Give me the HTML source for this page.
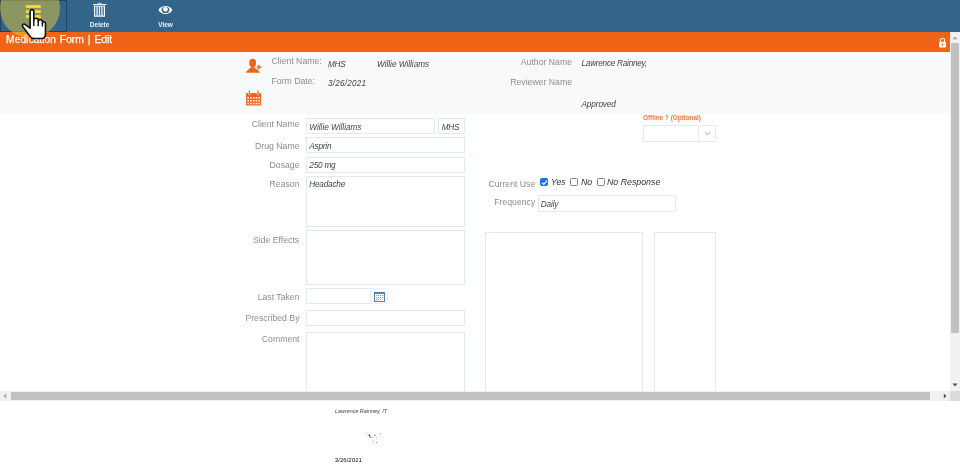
<!DOCTYPE html>
<html>
<head>
<meta charset="utf-8">
<title>Medication Form | Edit</title>
<style>
html,body{margin:0;padding:0;}
body{width:960px;height:469px;overflow:hidden;background:#fff;position:relative;will-change:transform;font-family:"Liberation Sans",sans-serif;}
.abs{position:absolute;}
#toolbar{left:0;top:0;width:960px;height:32px;background:#33658a;}
#btn1{left:0;top:0;width:65px;height:30px;border:1px solid #1f4461;background:#33658a;}
.tlabel{color:#eaf1f8;font-size:6.5px;font-weight:bold;text-align:center;width:60px;}
#titlebar{left:0;top:32px;width:950px;height:20px;background:#f06418;}
#title{left:6.1px;top:33.2px;color:#fff;font-size:10.3px;word-spacing:1.1px;-webkit-text-stroke:0.25px #fff;letter-spacing:0;line-height:14px;white-space:nowrap;}
#hdr{left:0;top:52px;width:950px;height:61.5px;background:#f8f9fb;}
.hl{color:#8c8c8c;font-size:8.7px;line-height:12px;white-space:nowrap;}
.hv{color:#444;font-size:8.2px;font-style:italic;line-height:10px;white-space:nowrap;}
.lbl{color:#8c8c8c;font-size:8.7px;line-height:12px;white-space:nowrap;text-align:right;width:100px;margin-left:-0.5px;}
.inp{border:1px solid #e0eaf5;background:#fff;box-sizing:border-box;color:#444;font-size:8.2px;font-style:italic;line-height:10px;padding:3.2px 0 0 2.3px;letter-spacing:-0.2px;white-space:nowrap;}
#vscroll{left:950px;top:32px;width:10px;height:359px;background:#f1f1f1;}
#vthumb{left:951px;top:42.5px;width:8px;height:290.3px;background:#c1c1c1;}
#hscroll{left:0;top:391px;width:950px;height:10px;background:#f1f1f1;}
#hthumb{left:10.5px;top:392px;width:919px;height:8px;background:#c1c1c1;}
#corner{left:950px;top:391px;width:10px;height:10px;background:#dcdcdc;}
.cb{width:6px;height:6px;border:1px solid #858585;border-radius:1.5px;background:#fff;box-sizing:content-box;}
.cbl{color:#333;font-size:8.8px;font-style:italic;line-height:12px;white-space:nowrap;}
</style>
</head>
<body>
<div id="toolbar" class="abs"></div>
<div id="btn1" class="abs"></div>

<!-- list icon (highlighted yellow) -->
<svg class="abs" style="left:0;top:0" width="60" height="32" viewBox="0 0 60 32">
  <g fill="#fde543">
    <rect x="25.9" y="5.1" width="14.9" height="2.8"/>
    <rect x="25.9" y="10.15" width="14.9" height="2.8"/>
    <rect x="25.9" y="15.2" width="14.9" height="2.7"/>
  </g>
</svg>

<!-- delete icon -->
<svg class="abs" style="left:90px;top:0px" width="20" height="20" viewBox="0 0 20 20">
  <g fill="none" stroke="#fff">
    <path d="M3 4.6h13.4" stroke-width="1"/>
    <path d="M7.6 4.2C7.8 3.3 8.4 3.3 9.7 3.3s1.900 0 2.100.9" stroke-width="0.9"/>
    <path d="M4.6 5.8v10.400h9.800V5.800" stroke-width="1.2"/>
    <path d="M4.6 6.2h9.800" stroke-width="0.8"/>
    <path d="M7.100 6.200v9.600M9.500 6.200v9.600M11.900 6.200v9.600" stroke-width="1.25"/>
  </g>
</svg>
<div class="abs tlabel" style="left:69.6px;top:21px;">Delete</div>

<!-- view icon -->
<svg class="abs" style="left:155px;top:0px" width="20" height="20" viewBox="0 0 20 20">
  <path d="M3.500 9.900C6 4.600 14.900 4.600 17.400 9.900C14.900 15.200 6 15.200 3.500 9.900z" fill="#fff"/>
  <ellipse cx="10.450" cy="9.900" rx="3.900" ry="3.100" fill="#33658a"/>
  <circle cx="10.450" cy="9.300" r="2.350" fill="#fff"/>
</svg>
<div class="abs tlabel" style="left:135.6px;top:21px;">View</div>

<div id="titlebar" class="abs"></div>
<div id="title" class="abs">Medication Form | Edit</div>

<!-- lock -->
<svg class="abs" style="left:938.1px;top:36.5px" width="9" height="12" viewBox="0 0 9 12">
  <path d="M2.4 5V3.3a2.1 2.1 0 0 1 4.2 0V5" fill="none" stroke="#fff" stroke-width="1.1"/>
  <rect x="1" y="4.8" width="7" height="5.8" rx="1" fill="#fff"/>
  <rect x="4" y="6.6" width="1" height="2" fill="#f06418"/>
</svg>

<div id="hdr" class="abs"></div>

<!-- person icon -->
<svg class="abs" style="left:240px;top:54px" width="30" height="58" viewBox="0 0 30 58">
  <g fill="#f06418">
    <ellipse cx="12.650" cy="8.900" rx="3.450" ry="4.100"/>
    <path d="M6.100 18.800C6.600 15.800 10.300 15.300 11.300 12.600H14C15 15.300 19.300 15.800 19.800 18.800z"/>
    <path d="M18.900 10.800l.7 1.600 1.600.7-1.600.7-.7 1.600-.7-1.600-1.600-.7 1.600-.7z" stroke="#f06418" stroke-width="0.7" stroke-linejoin="round"/>
  </g>
  <!-- calendar icon -->
  <g fill="#f06418">
    <rect x="6.100" y="39" width="15" height="12.400" rx="0.600"/>
    <rect x="8.400" y="36.100" width="1.900" height="4.700" rx="0.950" stroke="#f8f9fb" stroke-width="0.600"/>
    <rect x="17" y="36.100" width="1.900" height="4.700" rx="0.950" stroke="#f8f9fb" stroke-width="0.600"/>
  </g>
  <g fill="#f8f9fb">
    <rect x="7.400" y="43.100" width="1.600" height="1.600"/><rect x="10.150" y="43.100" width="1.600" height="1.600"/><rect x="12.900" y="43.100" width="1.600" height="1.600"/><rect x="15.650" y="43.100" width="1.600" height="1.600"/><rect x="18.400" y="43.100" width="1.600" height="1.600"/>
    <rect x="7.400" y="45.900" width="1.600" height="1.600"/><rect x="10.150" y="45.900" width="1.600" height="1.600"/><rect x="12.900" y="45.900" width="1.600" height="1.600"/><rect x="15.650" y="45.900" width="1.600" height="1.600"/><rect x="18.400" y="45.900" width="1.600" height="1.600"/>
    <rect x="7.400" y="48.700" width="1.600" height="1.600"/><rect x="10.150" y="48.700" width="1.600" height="1.600"/><rect x="12.900" y="48.700" width="1.600" height="1.600"/><rect x="15.650" y="48.700" width="1.600" height="1.600"/><rect x="18.400" y="48.700" width="1.600" height="1.600"/>
  </g>
</svg>

<div class="abs hl" style="left:271.5px;top:55.3px;">Client Name:</div>
<div class="abs hl" style="left:271.5px;top:74.8px;">Form Date:</div>
<div class="abs hv" style="left:328px;top:59.5px;letter-spacing:-0.3px;">MHS</div>
<div class="abs hv" style="left:377px;top:59.5px;">Willie Williams</div>
<div class="abs hv" style="left:328px;top:78.5px;letter-spacing:0.2px;">3/26/2021</div>

<div class="abs hl" style="left:472px;top:55.5px;width:100px;text-align:right;">Author Name</div>
<div class="abs hl" style="left:472px;top:75.7px;width:100px;text-align:right;">Reviewer Name</div>
<div class="abs hv" style="left:581.5px;top:59px;letter-spacing:-0.24px;">Lawrence Rainney,</div>
<div class="abs hv" style="left:581.5px;top:99.5px;letter-spacing:-0.1px;">Approved</div>

<!-- left column -->
<div class="abs lbl" style="left:200px;top:118px;">Client Name</div>
<div class="abs inp" style="left:306px;top:118px;width:128.7px;height:16px;letter-spacing:0;padding-top:3.8px;">Willie Williams</div>
<div class="abs inp" style="left:437.7px;top:118px;width:27.3px;height:16px;padding-left:3px;padding-top:3.8px;">MHS</div>

<div class="abs lbl" style="left:200px;top:139.5px;">Drug Name</div>
<div class="abs inp" style="left:306px;top:137px;width:159px;height:16px;padding-top:3.8px;">Asprin</div>

<div class="abs lbl" style="left:200px;top:159px;">Dosage</div>
<div class="abs inp" style="left:306px;top:157px;width:159px;height:16px;">250 mg</div>

<div class="abs lbl" style="left:200px;top:178px;">Reason</div>
<div class="abs inp" style="left:306px;top:176px;width:159px;height:51px;">Headache</div>

<div class="abs lbl" style="left:199.7px;top:233.7px;">Side Effects</div>
<div class="abs inp" style="left:306px;top:230px;width:159px;height:55px;"></div>

<div class="abs lbl" style="left:200px;top:291.4px;">Last Taken</div>
<div class="abs inp" style="left:306px;top:288px;width:65px;height:16px;border-right-color:#e9f0f8;"></div>
<div class="abs inp" style="left:370px;top:288px;width:18px;height:16px;border-color:#e9f0f8;"></div>
<svg class="abs" style="left:373.8px;top:292px" width="11" height="10" viewBox="0 0 11 10">
  <rect x="0.5" y="0.5" width="10" height="9" fill="#fff" stroke="#4a85ba" stroke-width="1"/>
  <rect x="0" y="0" width="11" height="2" fill="#4a85ba"/>
  <g fill="#6b9ccb"><rect x="2" y="3.1" width="1.2" height="0.9"/><rect x="4" y="3.1" width="1.2" height="0.9"/><rect x="6" y="3.1" width="1.2" height="0.9"/><rect x="8" y="3.1" width="1.2" height="0.9"/>
  <rect x="2" y="5.1" width="1.2" height="0.9"/><rect x="4" y="5.1" width="1.2" height="0.9"/><rect x="6" y="5.1" width="1.2" height="0.9"/><rect x="8" y="5.1" width="1.2" height="0.9"/>
  <rect x="2" y="7.1" width="1.2" height="0.9"/><rect x="4" y="7.1" width="1.2" height="0.9"/><rect x="6" y="7.1" width="1.2" height="0.9"/></g>
</svg>

<div class="abs lbl" style="left:200px;top:311.7px;">Prescribed By</div>
<div class="abs inp" style="left:306px;top:310px;width:159px;height:15.5px;"></div>

<div class="abs lbl" style="left:200px;top:333.4px;">Comment</div>
<div class="abs inp" style="left:306px;top:332px;width:159px;height:62px;"></div>

<!-- right column -->
<div class="abs" style="left:643px;top:114px;color:#f47b3a;font-size:6.4px;font-weight:bold;line-height:8px;white-space:nowrap;">Offline ? (Optional)</div>
<div class="abs inp" style="left:643px;top:125px;width:73px;height:17px;"></div>
<div class="abs" style="left:698px;top:126px;width:1px;height:15px;background:#e6eef7;"></div>
<svg class="abs" style="left:704px;top:131px" width="7" height="5" viewBox="0 0 7 5"><path d="M0.8 1l2.7 2.7L6.2 1" fill="none" stroke="#7aa3cf" stroke-width="1"/></svg>

<div class="abs lbl" style="left:435.8px;top:178px;">Current Use</div>
<div class="abs cb" style="left:540px;top:177.8px;background:#1a73e8;border-color:#1a73e8;"></div>
<svg class="abs" style="left:540.8px;top:178.6px" width="7" height="7" viewBox="0 0 7 7"><path d="M1 3.6l1.8 1.8L6 1.6" fill="none" stroke="#fff" stroke-width="1.2"/></svg>
<div class="abs cbl" style="left:551px;top:175.8px;">Yes</div>
<div class="abs cb" style="left:570px;top:177.8px;"></div>
<div class="abs cbl" style="left:581px;top:175.8px;">No</div>
<div class="abs cb" style="left:597px;top:177.8px;"></div>
<div class="abs cbl" style="left:607px;top:175.8px;">No Response</div>

<div class="abs lbl" style="left:435.8px;top:196px;">Frequency</div>
<div class="abs inp" style="left:537.5px;top:195px;width:138px;height:17px;padding-top:4px;letter-spacing:-0.15px;">Daily</div>

<div class="abs inp" style="left:484.5px;top:232px;width:158.5px;height:162px;"></div>
<div class="abs inp" style="left:654.3px;top:232px;width:61.5px;height:162px;"></div>

<!-- scrollbars -->
<div id="vscroll" class="abs"></div>
<div id="vthumb" class="abs"></div>
<svg class="abs" style="left:952.4px;top:36.2px" width="6" height="4" viewBox="0 0 6 4"><path d="M0.5 3.2L3 0.6 5.5 3.2z" fill="#a3a3a3"/></svg>
<svg class="abs" style="left:952px;top:383px" width="6" height="4" viewBox="0 0 6 4"><path d="M0.5 0.6h5L3 3.4z" fill="#505050"/></svg>
<div id="hscroll" class="abs"></div>
<div id="hthumb" class="abs"></div>
<svg class="abs" style="left:3px;top:393px" width="4" height="6" viewBox="0 0 4 6"><path d="M3.2 0.5L0.6 3 3.2 5.5z" fill="#a3a3a3"/></svg>
<svg class="abs" style="left:943px;top:393px" width="4" height="6" viewBox="0 0 4 6"><path d="M0.8 0.5v5L3.4 3z" fill="#505050"/></svg>
<div id="corner" class="abs"></div>

<!-- footer -->
<div class="abs" style="left:335px;top:407.6px;color:#444;font-size:5.4px;font-style:italic;line-height:6px;white-space:nowrap;">Lawrence Rainney, IT</div>
<div class="abs" style="left:334.8px;top:457.3px;color:#111;font-size:6.1px;line-height:6px;white-space:nowrap;">3/26/2021</div>
<svg class="abs" style="left:355px;top:425px" width="40" height="25" viewBox="0 0 40 25">
  <g fill="#555">
    <rect x="11" y="8" width="1" height="0.9" opacity="0.5"/>
    <rect x="13.7" y="9.300" width="1.5" height="2.300" opacity="0.95"/>
    <rect x="14.8" y="11.800" width="1.400" height="1.200" opacity="0.9"/>
    <rect x="17" y="12.100" width="1.400" height="0.8" opacity="0.4"/>
    <rect x="19" y="9.900" width="1.800" height="0.9" opacity="0.7"/>
    <rect x="25" y="8" width="0.9" height="0.9" opacity="0.7"/>
    <rect x="21.1" y="12.300" width="0.600" height="1.500" opacity="0.3"/>
    <rect x="17.200" y="15.900" width="1.600" height="0.9" opacity="0.45"/>
    <rect x="21" y="17" width="1.100" height="0.9" opacity="0.7"/>
    <rect x="12.500" y="9" width="1.200" height="0.7" opacity="0.3"/>
    <rect x="15.600" y="8.200" width="0.800" height="0.8" opacity="0.25"/>
  </g>
</svg>

<!-- click highlight + hand cursor -->
<div class="abs" style="left:0px;top:-22px;width:60px;height:60px;border-radius:50%;background:rgba(238,206,56,0.47);"></div>
<svg class="abs" style="left:0;top:0" width="60" height="45" viewBox="0 0 60 45">
  <path d="M30.1 28.2V11.5a1.85 1.85 0 0 1 3.7 0V20.2a2.2 1.9 0 0 1 4.4 0V21.6a2.1 1.8 0 0 1 4.2 0V23.5a1.55 1.7 0 0 1 3.1 0V33.500C45.5 36.800 44.300 38.500 41.800 38.500H33.800C31.800 38.500 30.800 37.600 29.800 36.100L22.700 26.600C21.600 25.100 23.400 23.300 24.900 24.300Z" fill="#fff" stroke="#111" stroke-width="1.6" stroke-linejoin="round"/>
  <path d="M33.8 20V26M38.2 21.5V26.3M42.4 23V26.5" stroke="#111" stroke-width="1.4" fill="none"/>
</svg>
</body>
</html>
